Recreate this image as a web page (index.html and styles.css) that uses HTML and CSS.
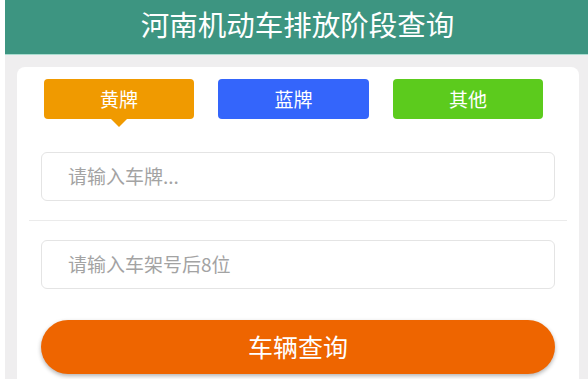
FILE: index.html
```html
<!DOCTYPE html>
<html lang="zh-CN">
<head>
<meta charset="utf-8">
<title>河南机动车排放阶段查询</title>
<link rel="stylesheet" href="styles.css">
</head>
<body>
<div class="page">
  <header class="header">河南机动车排放阶段查询</header>
  <main class="main">
    <section class="card">
      <div class="tabs">
        <div class="tab tab-yellow active">黄牌</div>
        <div class="tab tab-blue">蓝牌</div>
        <div class="tab tab-green">其他</div>
      </div>
      <div class="field field-first"><span class="placeholder">请输入车牌...</span></div>
      <div class="divider"></div>
      <div class="field"><span class="placeholder">请输入车架号后8位</span></div>
      <div class="submit">车辆查询</div>
    </section>
  </main>
</div>
</body>
</html>
```
FILE: styles.css
```css
* { box-sizing: border-box; }
html, body {
  margin: 0;
  padding: 0;
  background: #ffffff;
  font-family: "Noto Sans CJK SC", "Noto Sans", sans-serif;
}
.page {
  margin-left: 5px;
  height: 379px;
  background: #efeeef;
  overflow: hidden;
}
.header {
  height: 55px;
  background: #3d9581;
  border-bottom: 1px solid #a9dccf;
  color: #ffffff;
  font-size: 28.5px;
  line-height: 48px;
  text-align: center;
  padding-left: 2px;
}
.main {
  padding: 12px 9px 0 12px;
}
.card {
  background: #ffffff;
  border-radius: 8px 8px 0 0;
  padding: 12px 0 20px 0;
  min-height: 330px;
}
.tabs {
  display: flex;
  gap: 24px;
  padding-left: 27px;
}
.tab {
  position: relative;
  width: 150px;
  height: 40px;
  border-radius: 4px;
  color: #ffffff;
  font-size: 19px;
  line-height: 40px;
  text-align: center;
}
.tab-yellow { background: #f09a00; }
.tab-blue { background: #3465fb; width: 151px; }
.tab-green { background: #5ccb1d; }
.tab.active::after {
  content: "";
  position: absolute;
  left: 50%;
  bottom: -8px;
  margin-left: -8px;
  border-left: 8px solid transparent;
  border-right: 8px solid transparent;
  border-top: 8px solid #f09a00;
}
.field {
  margin: 0 24px;
  height: 49px;
  border: 1px solid #e4e4e4;
  border-radius: 6px;
  padding-left: 26px;
  padding-bottom: 2px;
  display: flex;
  align-items: center;
}
.field-first { margin-top: 33px; }
.placeholder {
  color: #a3a3a3;
  font-size: 19px;
}
.divider {
  margin: 19px 12px 19px;
  height: 1px;
  background: #ebebeb;
}
.submit {
  margin: 31px 24px 0;
  height: 54px;
  border-radius: 27px;
  background: #ee6500;
  box-shadow: 0 2px 4px rgba(0, 0, 0, 0.3);
  color: #ffffff;
  font-size: 25px;
  line-height: 52px;
  text-align: center;
}
```
